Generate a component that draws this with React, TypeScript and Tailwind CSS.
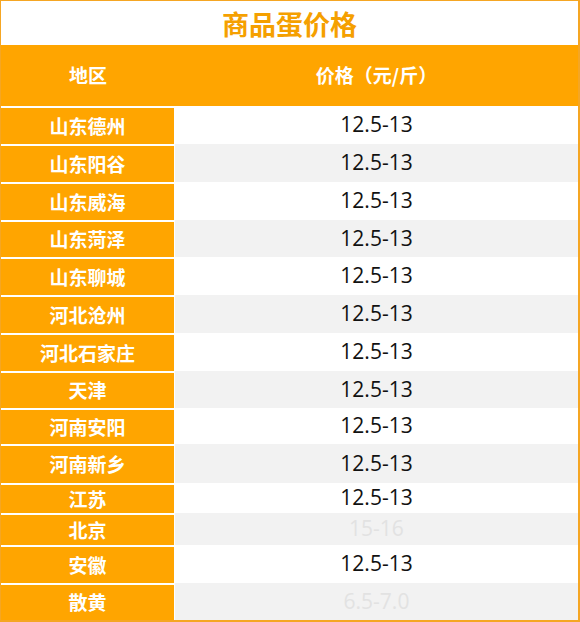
type Row = { region: string; price: string; h: string; faded?: boolean }

const rows: Row[] = [
  { region: '山东德州', price: '12.5-13', h: 'h-[38px]' },
  { region: '山东阳谷', price: '12.5-13', h: 'h-[38px]' },
  { region: '山东威海', price: '12.5-13', h: 'h-[38px]' },
  { region: '山东菏泽', price: '12.5-13', h: 'h-[37px]' },
  { region: '山东聊城', price: '12.5-13', h: 'h-[38px]' },
  { region: '河北沧州', price: '12.5-13', h: 'h-[38px]' },
  { region: '河北石家庄', price: '12.5-13', h: 'h-[38px]' },
  { region: '天津', price: '12.5-13', h: 'h-[37px]' },
  { region: '河南安阳', price: '12.5-13', h: 'h-[36px]' },
  { region: '河南新乡', price: '12.5-13', h: 'h-[39px]' },
  { region: '江苏', price: '12.5-13', h: 'h-[30px]' },
  { region: '北京', price: '15-16', h: 'h-[32px]', faded: true },
  { region: '安徽', price: '12.5-13', h: 'h-[38px]' },
  { region: '散黄', price: '6.5-7.0', h: 'h-[37px]', faded: true },
]

export default function App() {
  return (
    <div className="w-[580px] h-[622px] overflow-hidden border-t border-l border-r-2 border-b-2 border-[#f5a623] bg-white font-['Open_Sans','Noto_Sans_CJK_SC',sans-serif]">
      {/* title */}
      <div className="h-[44px] flex items-center justify-center">
        <span className="font-['Noto_Sans_CJK_SC',sans-serif] text-[27px] font-bold leading-none text-[#f5a000]">
          商品蛋价格
        </span>
      </div>

      {/* header */}
      <div className="h-[61px] flex bg-[#ffa500] font-['Noto_Sans_CJK_SC',sans-serif] text-[19px] font-bold text-white">
        <div className="w-[174px] flex items-center justify-center">地区</div>
        <div className="flex-1 flex items-center justify-center">价格（元/斤）</div>
      </div>

      {rows.map((r, i) => (
        <div key={r.region} className={`flex ${r.h}`}>
          <div className="w-[174px] shrink-0 flex items-center justify-center border-t-2 border-r border-white bg-[#ffa500] font-['Noto_Sans_CJK_SC',sans-serif] text-[19px] font-bold text-white">
            {r.region}
          </div>
          <div
            className={`flex-1 flex items-center justify-center text-[21px] ${
              i % 2 === 0 ? 'bg-white' : 'bg-[#f2f2f2]'
            } ${r.faded ? 'text-[#e2e2e2]' : 'text-[#111111]'}`}
          >
            {r.price}
          </div>
        </div>
      ))}
    </div>
  )
}
